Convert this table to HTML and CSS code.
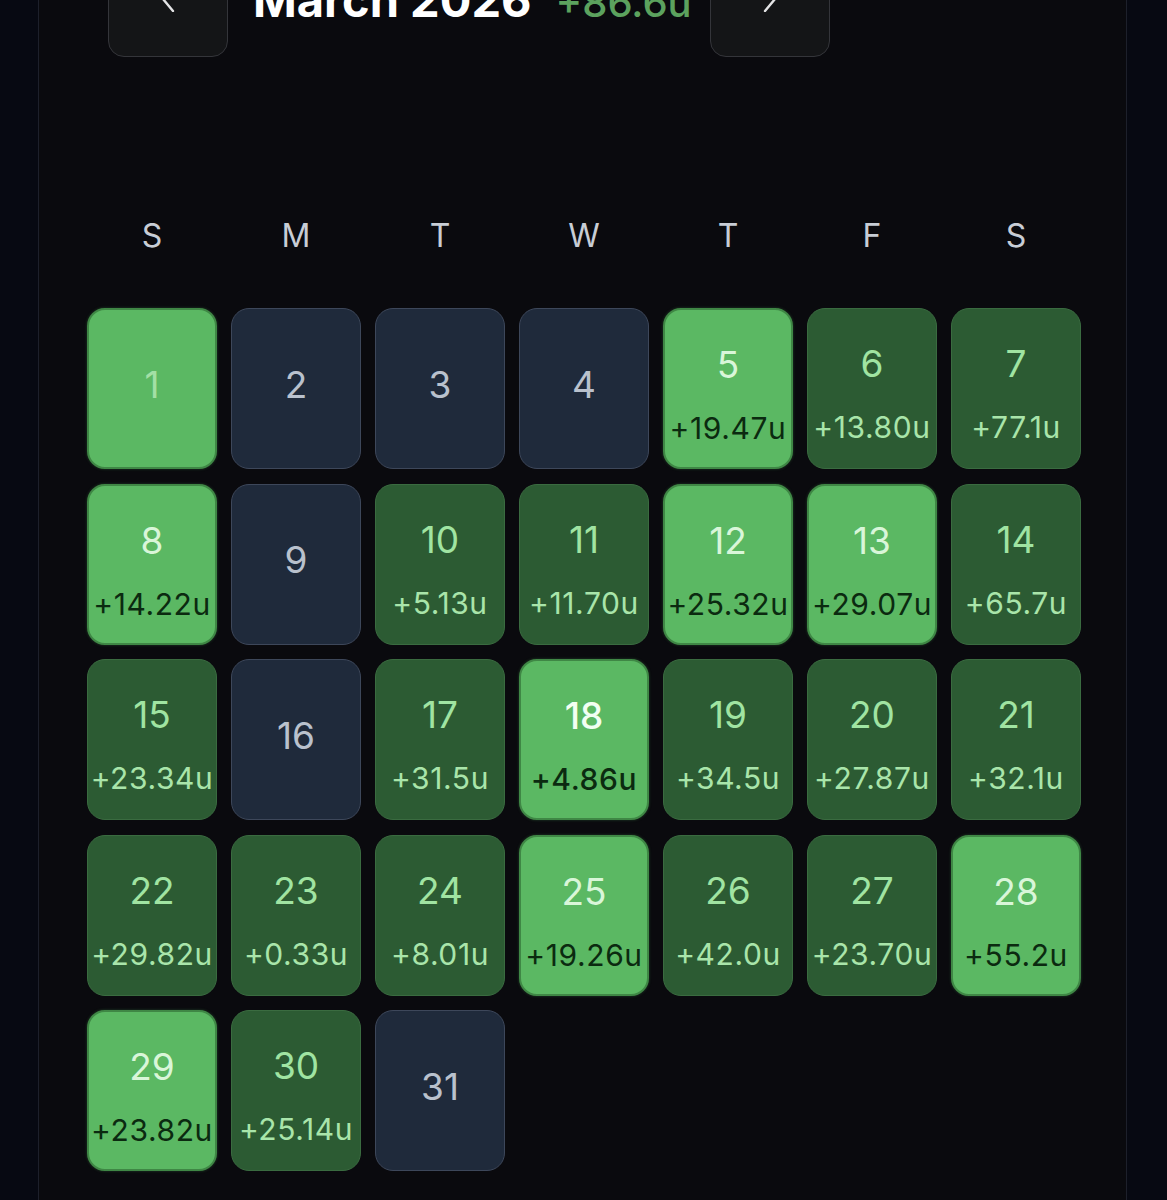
FILE: index.html
```html
<!DOCTYPE html>
<html>
<head>
<meta charset="utf-8">
<link rel="stylesheet" href="styles.css">
</head>
<body>
<div class="panel">
  <div class="header">
    <button class="nav-btn" aria-label="Previous month">
      <svg width="14" height="26" viewBox="0 0 14 26"><polyline points="12,1 2,13 12,25" fill="none" stroke="#e4e4e6" stroke-width="2.4" stroke-linecap="round" stroke-linejoin="round"/></svg>
    </button>
    <div class="title"><span class="month">March 2026</span><span class="total">+86.6u</span></div>
    <button class="nav-btn" aria-label="Next month">
      <svg width="14" height="26" viewBox="0 0 14 26"><polyline points="2,1 12,13 2,25" fill="none" stroke="#e4e4e6" stroke-width="2.4" stroke-linecap="round" stroke-linejoin="round"/></svg>
    </button>
  </div>

  <div class="weekdays">
    <div>S</div><div>M</div><div>T</div><div>W</div><div>T</div><div>F</div><div>S</div>
  </div>

  <div class="grid">
    <div class="cell hi empty"><span class="num pale">1</span></div>
    <div class="cell none empty"><span class="num">2</span></div>
    <div class="cell none empty"><span class="num">3</span></div>
    <div class="cell none empty"><span class="num">4</span></div>
    <div class="cell hi"><span class="num">5</span><span class="val">+19.47u</span></div>
    <div class="cell mid"><span class="num">6</span><span class="val">+13.80u</span></div>
    <div class="cell mid"><span class="num">7</span><span class="val">+77.1u</span></div>

    <div class="cell hi"><span class="num">8</span><span class="val">+14.22u</span></div>
    <div class="cell none empty"><span class="num">9</span></div>
    <div class="cell mid"><span class="num">10</span><span class="val">+5.13u</span></div>
    <div class="cell mid"><span class="num">11</span><span class="val">+11.70u</span></div>
    <div class="cell hi"><span class="num">12</span><span class="val">+25.32u</span></div>
    <div class="cell hi"><span class="num">13</span><span class="val">+29.07u</span></div>
    <div class="cell mid"><span class="num">14</span><span class="val">+65.7u</span></div>

    <div class="cell mid"><span class="num">15</span><span class="val">+23.34u</span></div>
    <div class="cell none empty"><span class="num">16</span></div>
    <div class="cell mid"><span class="num">17</span><span class="val">+31.5u</span></div>
    <div class="cell hi today"><span class="num">18</span><span class="val">+4.86u</span></div>
    <div class="cell mid"><span class="num">19</span><span class="val">+34.5u</span></div>
    <div class="cell mid"><span class="num">20</span><span class="val">+27.87u</span></div>
    <div class="cell mid"><span class="num">21</span><span class="val">+32.1u</span></div>

    <div class="cell mid"><span class="num">22</span><span class="val">+29.82u</span></div>
    <div class="cell mid"><span class="num">23</span><span class="val">+0.33u</span></div>
    <div class="cell mid"><span class="num">24</span><span class="val">+8.01u</span></div>
    <div class="cell hi"><span class="num">25</span><span class="val">+19.26u</span></div>
    <div class="cell mid"><span class="num">26</span><span class="val">+42.0u</span></div>
    <div class="cell mid"><span class="num">27</span><span class="val">+23.70u</span></div>
    <div class="cell hi"><span class="num">28</span><span class="val">+55.2u</span></div>

    <div class="cell hi"><span class="num">29</span><span class="val">+23.82u</span></div>
    <div class="cell mid"><span class="num">30</span><span class="val">+25.14u</span></div>
    <div class="cell none empty"><span class="num">31</span></div>
  </div>
</div>
</body>
</html>
```

FILE: styles.css
```css
html, body {
  margin: 0;
  padding: 0;
  background: #070912;
  height: 1200px;
  overflow: hidden;
  font-family: Inter, "Liberation Sans", Arial, sans-serif;
}

.panel {
  margin: -100px 0 0 38px;
  width: 1089px;
  height: 1400px;
  box-sizing: border-box;
  background: #0a0a0e;
  border-left: 1px solid #1d202b;
  border-right: 1px solid #1d202b;
  padding: 0 45px 0 48px;
}

.header {
  display: flex;
  align-items: center;
  padding: 41px 0 0 21px;
}

.nav-btn {
  width: 120px;
  height: 116px;
  flex: none;
  box-sizing: border-box;
  background: #141517;
  border: 1.5px solid #34353a;
  border-radius: 16px;
  display: flex;
  align-items: center;
  justify-content: center;
  padding: 0;
}

.title {
  display: flex;
  align-items: baseline;
  gap: 24px;
  margin: 1px 18px 0 25px;
  white-space: nowrap;
}

.month {
  font-size: 47px;
  font-weight: 700;
  color: #ffffff;
}

.total {
  font-size: 40px;
  color: #5ca25e;
  font-weight: 500;
}

.weekdays {
  display: grid;
  grid-template-columns: repeat(7, 130px);
  column-gap: 14px;
  margin-top: 159px;
  font-size: 32px;
  line-height: 40px;
  color: #c8cdd5;
  text-align: center;
}

.grid {
  display: grid;
  grid-template-columns: repeat(7, 130px);
  grid-auto-rows: 161px;
  column-gap: 14px;
  row-gap: 14.5px;
  margin-top: 52px;
}

.cell {
  box-sizing: border-box;
  border-radius: 18px;
  display: flex;
  flex-direction: column;
  align-items: center;
  padding-top: 34px;
  white-space: nowrap;
}

.cell.empty {
  justify-content: center;
  padding: 0 0 8px 0;
}

.num {
  font-size: 37px;
  line-height: 42px;
  margin-bottom: 22px;
}

.cell.empty .num {
  margin-bottom: 0;
}

.val {
  font-size: 30px;
  line-height: 40px;
  letter-spacing: 0.6px;
}

.hi {
  background: #5bb863;
  border: 2px solid #3f8745;
  box-shadow: 0 0 3px rgba(80, 170, 90, 0.35);
}

.hi .num {
  color: #d9f6d9;
}

.hi .num.pale {
  color: #a3dfa5;
}

.hi .val {
  color: #0b2a10;
}

.today .num {
  color: #f2fff2;
  font-weight: 500;
}

.today .val {
  font-weight: 500;
}

.mid {
  background: #2c5b33;
  border: 1.5px solid #3a6b40;
}

.mid .num {
  color: #a0e4a2;
}

.mid .val {
  color: #a9e5aa;
}

.none {
  background: #1f2a3b;
  border: 1.5px solid #3d475a;
}

.none .num {
  color: #b9c1cd;
}
```
